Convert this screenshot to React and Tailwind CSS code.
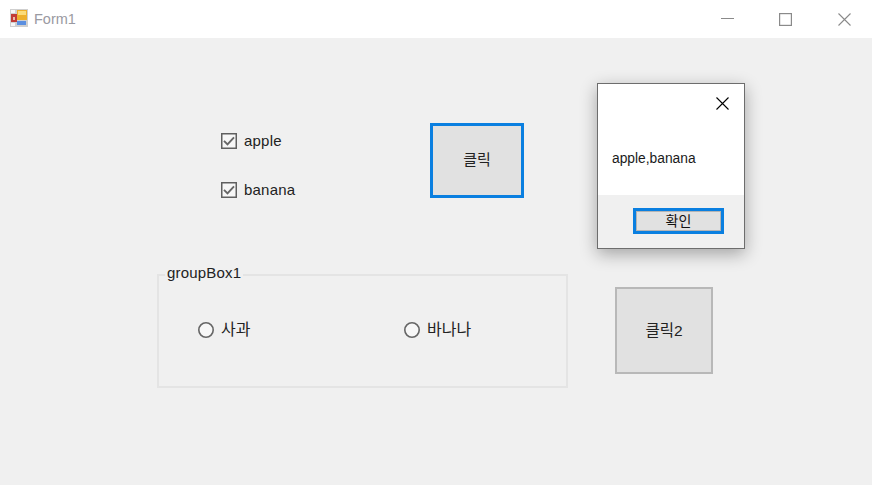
const font = "font-['Liberation_Sans','Noto_Sans_CJK_KR',sans-serif]";

function AppIcon() {
  return (
    <svg width="18" height="18" viewBox="0 0 18 18" className="mb-[2px] shrink-0">
      <rect x="0" y="0" width="18" height="18" fill="#cfcfcf" />
      <rect x="1" y="1" width="4" height="3" fill="#f6f6f6" />
      <rect x="1" y="14" width="4" height="3" fill="#f6f6f6" />
      <rect x="1" y="5" width="6" height="8" fill="#c23b35" />
      <rect x="3" y="8" width="2" height="3" fill="#e9b9a8" />
      <rect x="7" y="1" width="10" height="10" fill="#eeb02c" />
      <rect x="8" y="2" width="8" height="4" fill="#fbdc7a" />
      <rect x="7" y="12" width="9" height="4" fill="#5b8fe0" />
    </svg>
  );
}

function CloseGlyph({ className }) {
  return (
    <svg width="13" height="13" viewBox="0 0 13 13" className={className}>
      <path d="M0.5 0.5 L12.5 12.5 M12.5 0.5 L0.5 12.5" fill="none" stroke="currentColor" strokeWidth="1.1" />
    </svg>
  );
}

function CheckItem({ label }) {
  return (
    <div className="flex items-center gap-[7px]">
      <svg width="16" height="16" viewBox="0 0 16 16" className="shrink-0">
        <rect x="0.75" y="0.75" width="14.5" height="14.5" fill="#f7f7f7" stroke="#606060" strokeWidth="1.5" />
        <path d="M3 7.8 L6.5 11.4 L13 4.4" fill="none" stroke="#666666" strokeWidth="1.9" />
      </svg>
      <span className="text-[15px] leading-4 tracking-[0.2px] text-[#222222]">{label}</span>
    </div>
  );
}

function RadioItem({ label, className }) {
  return (
    <div className={`flex items-center gap-[7px] ${className}`}>
      <svg width="16" height="16" viewBox="0 0 16 16" className="shrink-0">
        <circle cx="8" cy="8" r="7.2" fill="#f7f7f7" stroke="#666666" strokeWidth="1.6" />
      </svg>
      <span className="text-[16px] leading-4 text-[#222222]">{label}</span>
    </div>
  );
}

function MessageBox() {
  return (
    <div className="absolute left-[597px] top-[45px] flex h-[166px] w-[148px] flex-col border border-[#6d6d6d] bg-white shadow-[0_5px_16px_rgba(0,0,0,0.32)]">
      <div className="flex h-[111px] flex-col bg-white">
        <div className="flex justify-end pt-[13px] pr-[15px] text-black">
          <CloseGlyph />
        </div>
        <p className="mt-[41px] ml-[14px] text-[13.8px] leading-4 text-[#1a1a1a]">apple,banana</p>
      </div>
      <div className="flex flex-1 justify-end bg-[#f0f0f0] pt-[13px] pr-[20px]">
        <button className="flex h-[26px] w-[91px] items-center justify-center border-[3px] border-[#0a7fe0] bg-[#e1e1e1] text-[14px] leading-4 text-[#111111] shadow-[inset_0_0_0_1px_#b4b4b4]">
          확인
        </button>
      </div>
    </div>
  );
}

export default function App() {
  return (
    <div className={`flex h-[485px] w-[872px] flex-col overflow-hidden bg-[#f0f0f0] ${font}`}>
      {/* title bar */}
      <div className="flex h-[38px] items-center bg-white">
        <div className="ml-[10px] flex items-center gap-[6px]">
          <AppIcon />
          <span className="text-[14.5px] leading-4 text-[#9a9aa2]">Form1</span>
        </div>
        <div className="ml-auto flex items-center text-[#8a8a8a]">
          <svg width="13" height="13" viewBox="0 0 13 13" className="mr-[45px]">
            <path d="M0 5.5 H13" fill="none" stroke="currentColor" strokeWidth="1" />
          </svg>
          <svg width="13" height="13" viewBox="0 0 13 13" className="mr-[46px]">
            <rect x="0.6" y="0.6" width="11.8" height="11.8" fill="none" stroke="currentColor" strokeWidth="1.2" />
          </svg>
          <CloseGlyph className="mr-[21px]" />
        </div>
      </div>

      {/* form body */}
      <div className="relative flex-1">
        <div className="ml-[221px] flex pt-[85px]">
          <div className="flex w-[209px] flex-col gap-[33px] pt-[10px]">
            <CheckItem label="apple" />
            <CheckItem label="banana" />
          </div>
          <button className="h-[75px] w-[94px] border-[3px] border-[#0a7fe0] bg-[#e1e1e1] text-[15px] text-[#222222]">
            클릭
          </button>
        </div>

        <div className="ml-[157px] mt-[76px] flex items-start">
          <div className="relative flex h-[114px] w-[411px] items-start border-2 border-[#e4e4e4] px-[39px]">
            <span className="absolute left-[6px] top-[-11px] bg-[#f0f0f0] px-[2px] text-[15px] leading-4 tracking-[0.2px] text-[#222222]">
              groupBox1
            </span>
            <RadioItem label="사과" className="mt-[46px] w-[206px]" />
            <RadioItem label="바나나" className="mt-[46px]" />
          </div>
          <button className="ml-[47px] mt-[13px] h-[87px] w-[98px] border-2 border-[#b8b8b8] bg-[#e1e1e1] text-[15.5px] text-[#222222]">
            클릭2
          </button>
        </div>

        <MessageBox />
      </div>
    </div>
  );
}
